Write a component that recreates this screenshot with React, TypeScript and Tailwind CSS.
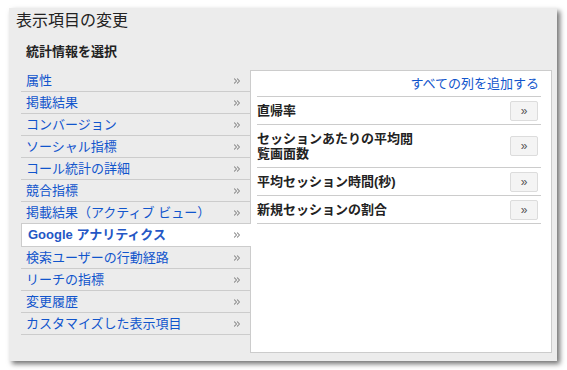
import { ChevronsRight } from "lucide-react";

const categories = [
  "属性",
  "掲載結果",
  "コンバージョン",
  "ソーシャル指標",
  "コール統計の詳細",
  "競合指標",
  "掲載結果（アクティブ ビュー）",
  "Google アナリティクス",
  "検索ユーザーの行動経路",
  "リーチの指標",
  "変更履歴",
  "カスタマイズした表示項目",
];

const selected = "Google アナリティクス";

const metrics = [
  "直帰率",
  "セッションあたりの平均閲覧画面数",
  "平均セッション時間(秒)",
  "新規セッションの割合",
];

export default function App() {
  return (
    <div
      className="w-[567px] h-[370px] bg-white pl-[9px] pt-[8px]"
      style={{ fontFamily: '"Liberation Sans", "Noto Sans CJK JP", sans-serif' }}
    >
      <div className="w-[548px] h-[353px] bg-[#ececec] shadow-[3px_3px_5px_rgba(0,0,0,0.55)] flex flex-col pb-[8px]">
        <div className="pl-[7px] pt-[3px] text-[16px] leading-[20px] text-[#222]">表示項目の変更</div>
        <div className="pl-[17px] mt-[13px] text-[13px] leading-[16px] font-bold text-[#222]">統計情報を選択</div>

        <div className="flex flex-1 mt-[10px] pl-[12px] pr-[5px] min-h-0">
          {/* ── categories ── */}
          <div className="w-[229px] flex flex-col">
            {categories.map((c) =>
              c === selected ? (
                <div
                  key={c}
                  className="relative z-10 w-[230px] mr-[-1px] h-[23px] bg-white border-l border-b border-[#cccccc] flex items-center justify-between pl-[6px] pr-[9px]"
                >
                  <span className="text-[13px] font-bold text-[#2457c5]">{c}</span>
                  <ChevronsRight className="w-[10px] h-[10px] text-[#888]" strokeWidth={2.5} />
                </div>
              ) : (
                <div
                  key={c}
                  className="h-[22px] border-b border-[#cccccc] flex items-center justify-between pl-[5px] pr-[8px]"
                >
                  <span className="text-[13px] text-[#1155cc]">{c}</span>
                  <ChevronsRight className="w-[10px] h-[10px] text-[#888]" strokeWidth={2.5} />
                </div>
              )
            )}
          </div>

          {/* ── chosen metrics ── */}
          <div className="flex-1 bg-white border border-[#cccccc] pl-[6px] pr-[10px]">
            <div className="h-[26px] border-b border-[#cccccc] flex items-center justify-end pr-[2px] pt-[1px]">
              <span className="text-[13px] text-[#1155cc]">すべての列を追加する</span>
            </div>
            {metrics.map((m) => (
              <div
                key={m}
                className="flex items-center justify-between border-b border-[#cccccc] py-[6px] pr-[3px]"
              >
                <span className="w-[160px] text-[13px] leading-[15px] font-bold text-[#222]">{m}</span>
                <button className="-my-[3px] w-[28px] h-[20px] rounded-[2px] border border-[#dcdcdc] bg-[#f4f4f4] text-[12px] leading-none text-[#555] flex items-center justify-center">
                  »
                </button>
              </div>
            ))}
          </div>
        </div>
      </div>
    </div>
  );
}
